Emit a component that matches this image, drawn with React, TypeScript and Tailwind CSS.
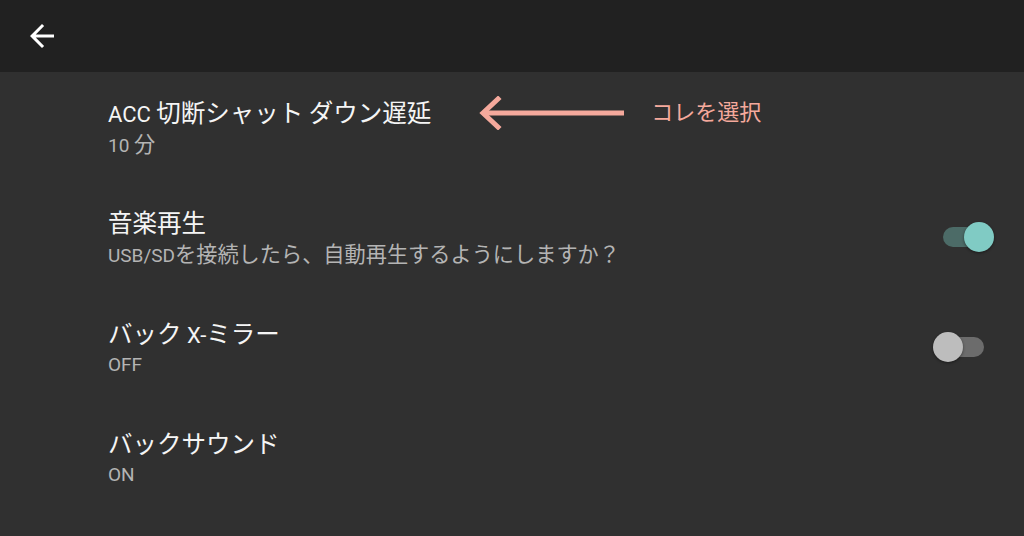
import React from "react";

const font = { fontFamily: 'Roboto, "Noto Sans CJK JP", sans-serif' };

// Japanese glyphs sit larger than the Latin ones on the device, so size them apart
const cjk = /([\u3000-\u30ff\u4e00-\u9fff\uff00-\uffef]+)/;

const Mixed = ({ text, big }: { text: string; big: boolean }) => (
  <>
    {text.split(cjk).map((part, i) =>
      cjk.test(part) ? (
        <span key={i} className={big ? "text-[24.5px]" : "text-[21.2px]"}>
          {part}
        </span>
      ) : (
        <span key={i}>{part}</span>
      )
    )}
  </>
);

const Toggle = ({ on, className }: { on: boolean; className?: string }) => (
  <div className={`relative w-[56px] h-[30px] flex items-center justify-center -mt-1 ${className ?? ""}`}>
    <div className={`w-[46px] h-[20px] rounded-full ${on ? "bg-[#4c6b67]" : "bg-[#6c6c6c]"}`} />
    <div
      className={`absolute top-0 w-[30px] h-[30px] rounded-full shadow-[0_1px_3px_rgba(0,0,0,0.45)] ${
        on ? "right-0 bg-[#80cbc4]" : "left-0 bg-[#bdbdbd]"
      }`}
    />
  </div>
);

const Row = ({
  title,
  sub,
  extra,
  right,
}: {
  title: string;
  sub: string;
  extra?: React.ReactNode;
  right?: React.ReactNode;
}) => (
  <div className="h-[110px] flex items-center pl-[108px]">
    <div className="flex-1 flex flex-col">
      <div className="flex items-center h-8">
        <span className="text-[22px] leading-8 text-[#f5f5f5] whitespace-nowrap translate-y-[2px]">
          <Mixed text={title} big />
        </span>
        {extra}
      </div>
      <span className="text-[19px] leading-8 text-[#b4b4b4] whitespace-nowrap">
        <Mixed text={sub} big={false} />
      </span>
    </div>
    {right}
  </div>
);

const Pointer = () => (
  <div className="flex items-center ml-[48px]">
    <svg width="148" height="34" viewBox="0 0 148 34">
      <path d="M19 3 L4 17 L19 31" fill="none" stroke="#f5a99c" strokeWidth="5" strokeLinecap="square" />
      <path d="M6 17 H145" stroke="#f5a99c" strokeWidth="5" />
    </svg>
    <span className="ml-[24px] text-[22px] leading-8 text-[#f5a99c]">コレを選択</span>
  </div>
);

export default function App() {
  return (
    <div className="w-[1024px] h-[536px] bg-[#303030] overflow-hidden" style={font}>
      <header className="h-[72px] bg-[#212121] flex items-center pl-[24px]">
        <svg width="36" height="36" viewBox="0 0 24 24" fill="#ffffff">
          <path d="M20 11H7.83l5.59-5.59L12 4l-8 8 8 8 1.41-1.41L7.83 13H20v-2z" />
        </svg>
      </header>
      <div className="pt-[2px]">
        <Row title="ACC 切断シャット ダウン遅延" sub="10 分" extra={<Pointer />} />
        <Row
          title="音楽再生"
          sub="USB/SDを接続したら、自動再生するようにしますか？"
          right={<Toggle on className="mr-[30px]" />}
        />
        <Row title="バック X-ミラー" sub="OFF" right={<Toggle on={false} className="mr-[35px]" />} />
        <Row title="バックサウンド" sub="ON" />
      </div>
    </div>
  );
}
